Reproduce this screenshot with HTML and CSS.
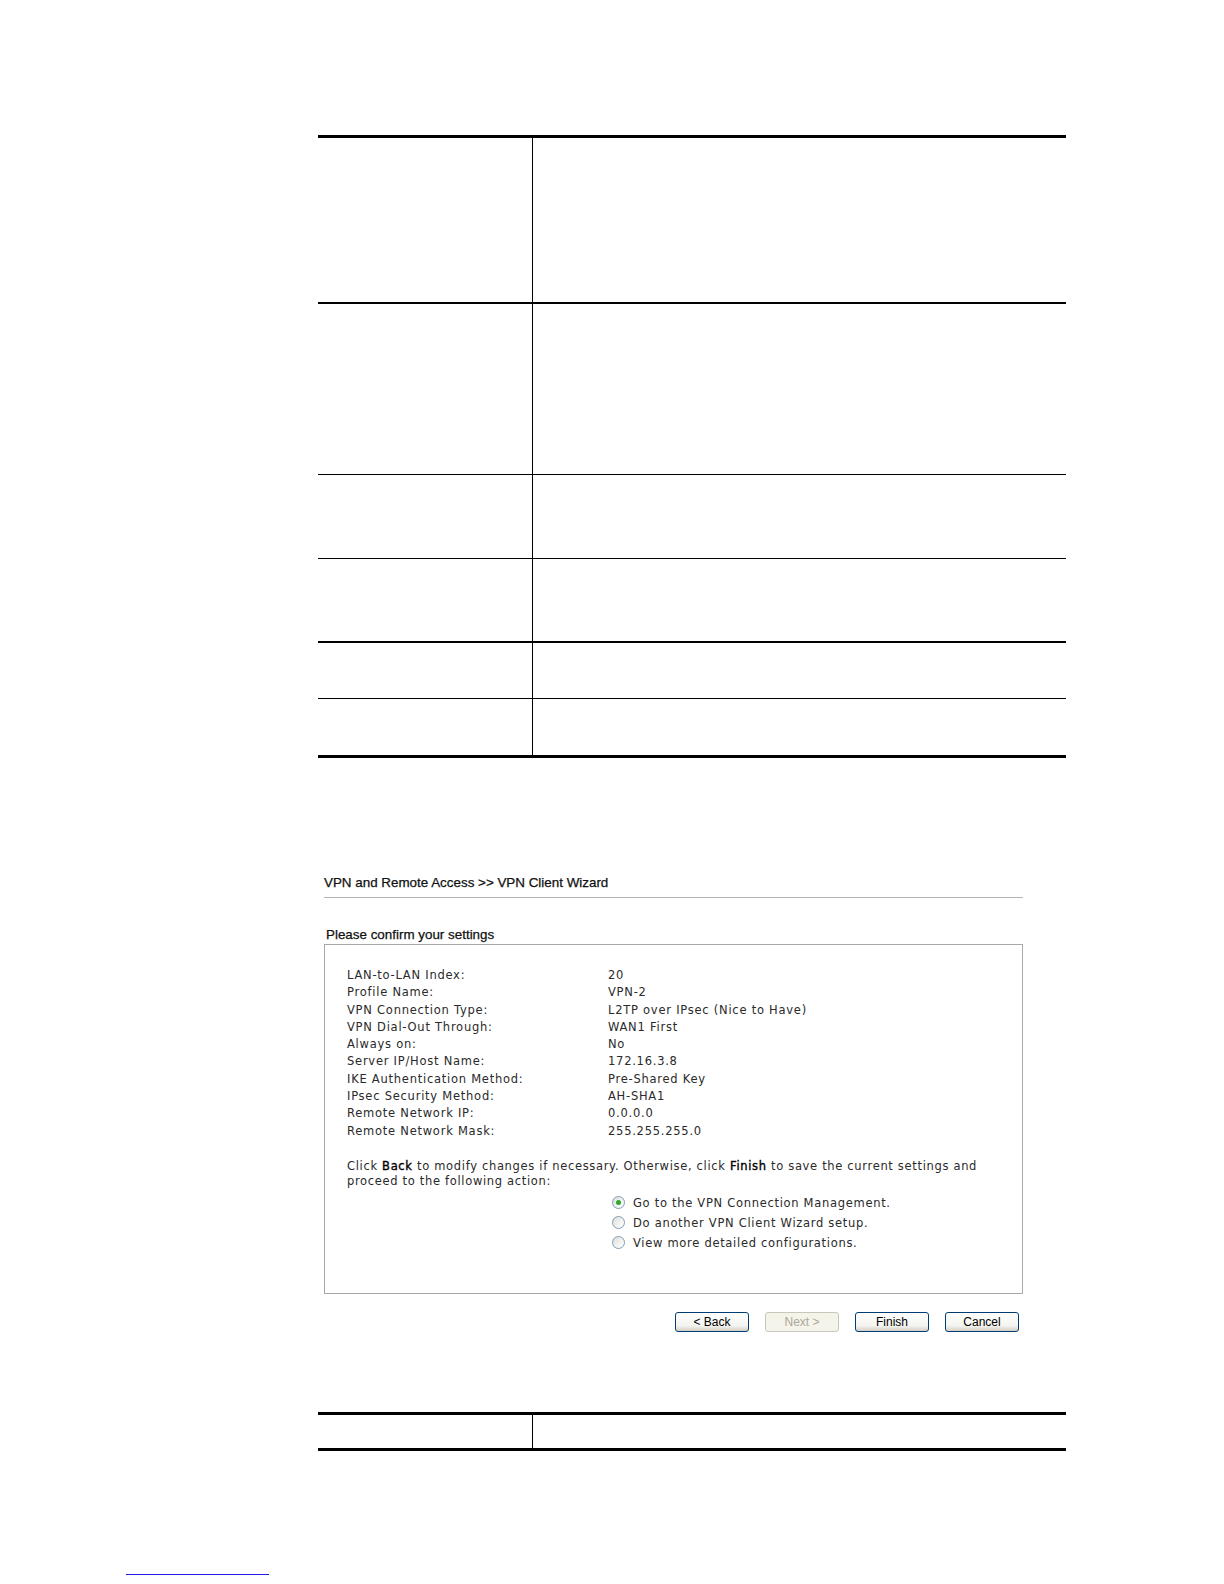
FILE: index.html
```html
<!DOCTYPE html>
<html>
<head>
<meta charset="utf-8">
<title>VPN Client Wizard</title>
<link rel="stylesheet" href="styles.css">
</head>
<body>
<div class="page">
  <div class="tbl tbl-top">
    <div class="row r1 line-2"><div class="cell-l"></div><div class="cell-r"></div></div>
    <div class="row r2 line-1"><div class="cell-l"></div><div class="cell-r"></div></div>
    <div class="row r3 line-1"><div class="cell-l"></div><div class="cell-r"></div></div>
    <div class="row r4 line-2"><div class="cell-l"></div><div class="cell-r"></div></div>
    <div class="row r5 line-1"><div class="cell-l"></div><div class="cell-r"></div></div>
    <div class="row r6 line-3"><div class="cell-l"></div><div class="cell-r"></div></div>
  </div>

  <div class="wizard">
    <div class="wiz-title">VPN and Remote Access &gt;&gt; VPN Client Wizard</div>
    <div class="wiz-sub">Please confirm your settings</div>
    <div class="wiz-box">
      <div class="kv">
        <div class="k">LAN-to-LAN Index:</div><div class="v">20</div>
        <div class="k">Profile Name:</div><div class="v">VPN-2</div>
        <div class="k">VPN Connection Type:</div><div class="v">L2TP over IPsec (Nice to Have)</div>
        <div class="k">VPN Dial-Out Through:</div><div class="v">WAN1 First</div>
        <div class="k">Always on:</div><div class="v">No</div>
        <div class="k">Server IP/Host Name:</div><div class="v">172.16.3.8</div>
        <div class="k">IKE Authentication Method:</div><div class="v">Pre-Shared Key</div>
        <div class="k">IPsec Security Method:</div><div class="v">AH-SHA1</div>
        <div class="k">Remote Network IP:</div><div class="v">0.0.0.0</div>
        <div class="k">Remote Network Mask:</div><div class="v">255.255.255.0</div>
      </div>
      <p class="note">Click <span class="em">Back</span> to modify changes if necessary. Otherwise, click <span class="em">Finish</span> to save the current settings and<br>proceed to the following action:</p>
      <div class="radios">
        <div class="opt"><span class="radio checked"></span><span>Go to the VPN Connection Management.</span></div>
        <div class="opt"><span class="radio"></span><span>Do another VPN Client Wizard setup.</span></div>
        <div class="opt"><span class="radio"></span><span>View more detailed configurations.</span></div>
      </div>
    </div>
    <div class="buttons">
      <button class="btn">&lt; Back</button>
      <button class="btn disabled">Next &gt;</button>
      <button class="btn">Finish</button>
      <button class="btn">Cancel</button>
    </div>
  </div>

  <div class="tbl tbl-bottom">
    <div class="row r7 line-3"><div class="cell-l"></div><div class="cell-r"></div></div>
  </div>
</div>
<div class="footer-link"></div>
</body>
</html>
```
FILE: styles.css
```css
html, body {
  margin: 0;
  padding: 0;
  background: #fff;
}
body {
  width: 1224px;
  height: 1584px;
  font-family: "DejaVu Sans", Verdana, sans-serif;
  color: #000;
}
.page {
  padding-left: 318px;
  width: 748px;
  padding-top: 135px;
}
.tbl {
  border-top: 3px solid #000;
}
.row {
  display: grid;
  grid-template-columns: 215px 1fr;
}
.cell-l {
  border-right: 1px solid #000;
}
.line-1 { border-bottom: 1px solid #000; }
.line-2 { border-bottom: 2px solid #000; }
.line-3 { border-bottom: 3px solid #000; }
.r1 { height: 164px; }
.r2 { height: 170px; }
.r3 { height: 83px; }
.r4 { height: 82px; }
.r5 { height: 55px; }
.r6 { height: 56px; }
.r7 { height: 33px; }

.wizard {
  margin-left: 6px;
  width: 699px;
  margin-top: 117px;
}
.wiz-title {
  font-family: "Liberation Sans", Arial, sans-serif;
  font-size: 13.4px;
  line-height: 16px;
  padding-bottom: 6px;
  border-bottom: 1px solid #b4b4b4;
  color: #111;
  -webkit-text-stroke: 0.25px #111;
}
.wiz-sub {
  font-family: "Liberation Sans", Arial, sans-serif;
  font-size: 13.4px;
  line-height: 16px;
  margin-top: 29px;
  padding-left: 2px;
  padding-bottom: 1px;
  color: #111;
  -webkit-text-stroke: 0.25px #111;
}
.wiz-box {
  border: 1px solid #a8a8a8;
  height: 326px;
  padding: 22px 0 0 22px;
  box-sizing: content-box;
  font-size: 11.5px;
  letter-spacing: 0.75px;
  color: #2a2a2a;
}
.kv {
  display: grid;
  grid-template-columns: 261px 1fr;
  line-height: 17.3px;
}
.note {
  margin: 19px 0 0 0;
  width: 670px;
  line-height: 15.5px;
  letter-spacing: 0.67px;
}
.note .em {
  color: #000;
  -webkit-text-stroke: 0.35px #000;
}
.radios {
  margin-left: 265px;
  margin-top: 3px;
}
.opt {
  display: flex;
  align-items: center;
  gap: 8px;
  height: 20px;
  letter-spacing: 0.7px;
}
.radio {
  width: 11px;
  height: 11px;
  border: 1px solid #7f9db9;
  border-radius: 50%;
  background: linear-gradient(135deg, #dcdcd7 0%, #f4f4f0 60%, #fff 100%);
  position: relative;
  flex: none;
}
.radio.checked::after {
  content: "";
  position: absolute;
  left: 3px;
  top: 3px;
  width: 5px;
  height: 5px;
  border-radius: 50%;
  background: #2fa82f;
}
.buttons {
  display: flex;
  justify-content: flex-end;
  gap: 16px;
  margin-top: 18px;
  padding-right: 4px;
}
.btn {
  width: 74px;
  height: 20px;
  border: 1px solid #003c74;
  border-radius: 3px;
  background: linear-gradient(#ffffff 0%, #f4f4f0 70%, #d6d0c5 100%);
  font-family: "Liberation Sans", Arial, sans-serif;
  font-size: 12px;
  color: #000;
  padding: 0;
  line-height: 18px;
}
.btn.disabled {
  border-color: #c9c7ba;
  color: #aca899;
  background: #f5f4ea;
}
.tbl-bottom {
  margin-top: 80px;
}
.footer-link {
  position: absolute;
  left: 126px;
  top: 1574px;
  width: 143px;
  height: 1px;
  background: #2020e0;
}
```
